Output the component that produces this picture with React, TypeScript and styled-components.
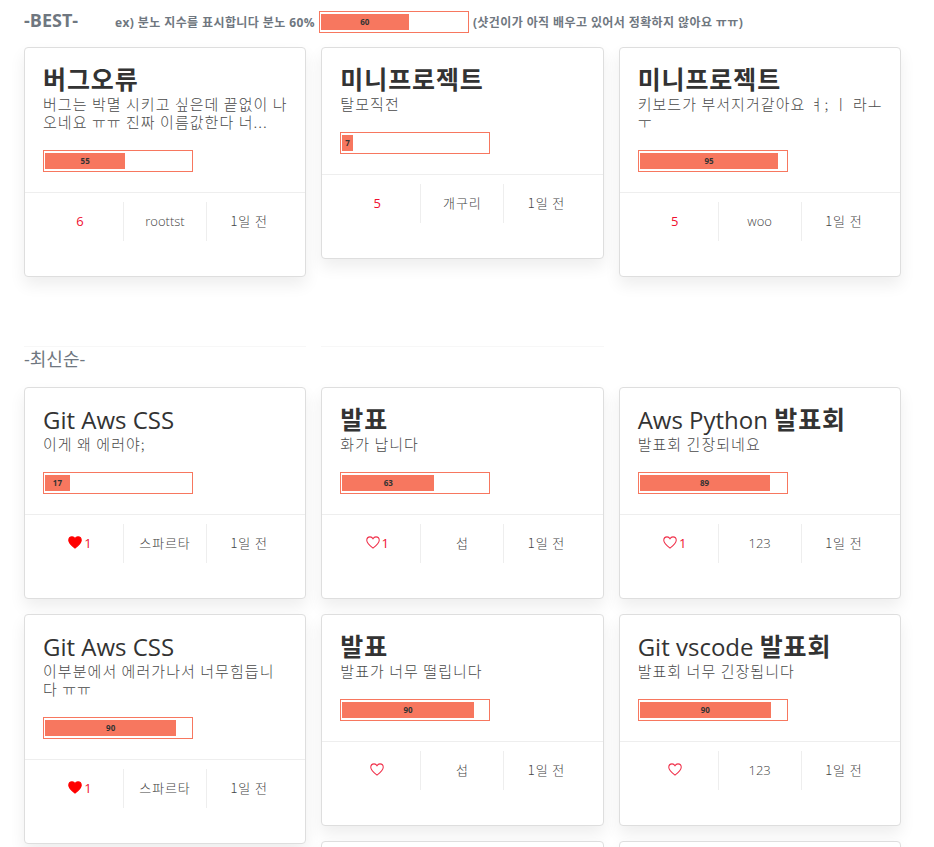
import React from 'react'
import styled, { createGlobalStyle } from 'styled-components'

const KR = '"Noto Sans CJK KR"'

const GlobalStyle = createGlobalStyle`
  html, body {
    margin: 0;
    padding: 0;
    height: 847px;
    overflow: hidden;
    background: #fff;
    font-family: "Open Sans", ${KR}, sans-serif;
    color: #333;
  }
`

const Page = styled.div`
  padding: 11px 33px 0 24px;
`

const HintRow = styled.div`
  display: flex;
  align-items: center;
  height: 22px;
  margin-bottom: 14px;
`

const SectionTitle = styled.div`
  color: #6f7780;
  font-weight: 700;
  font-size: 18px;
  line-height: 18px;
  margin-top: -4px;
  width: 91px;
  flex: none;
`

const HintText = styled.span`
  color: #6f7780;
  font-size: 12px;
  font-weight: 700;
  letter-spacing: 0.4px;
  white-space: nowrap;
  margin-right: ${({ $gap }: { $gap: number }) => $gap}px;
`

const Columns = styled.div`
  display: grid;
  grid-template-columns: repeat(3, 1fr);
  column-gap: 15px;
  align-items: start;
`

const Column = styled.div`
  display: flex;
  flex-direction: column;
  gap: 15px;
`

const Rules = styled(Columns)`
  margin-top: 69px;
`

const Rule = styled.div`
  height: 1px;
  background: #f7f7f7;
`

const LatestTitle = styled.div`
  color: #6f7780;
  font-size: 18px;
  font-weight: 400;
  line-height: 22px;
  margin: 1px 0 17px;
`

const Card = styled.div`
  background: #fff;
  border: 1px solid #dedede;
  border-radius: 4px;
  box-shadow: 0 8px 16px rgba(0, 0, 0, 0.07);
`

const NextCard = styled(Card)`
  min-height: 200px;
`

const CardBody = styled.div`
  padding: 17px 17px 20px 18px;
`

const Title = styled.h3`
  margin: 0;
  height: 30px;
  font-size: 24px;
  font-weight: 500;
  line-height: 30px;
  color: #333;
  white-space: nowrap;
`

const Hangul = styled.b`
  font-family: ${KR}, sans-serif;
  font-weight: 700;
  font-size: 25px;
  line-height: 0;
  letter-spacing: 0.9px;
`

const Desc = styled.p`
  margin: 0 0 19px;
  font-family: ${KR}, sans-serif;
  font-size: 15px;
  font-weight: 300;
  line-height: 18px;
  letter-spacing: 1.05px;
  color: #4a4a4a;
  word-break: break-all;
  min-height: 18px;
`

const Meter = styled.div`
  box-sizing: border-box;
  width: 150px;
  height: 22px;
  flex: none;
  border: 1px solid #f7775f;
  padding: 2px 1px;
  margin-right: ${({ $gap = 0 }: { $gap?: number }) => $gap}px;
`

const MeterFill = styled.div`
  height: 16px;
  background: #f7775f;
  color: #333;
  font-size: 8px;
  font-weight: 700;
  line-height: 16px;
  text-align: center;
`

const CardFooter = styled.div`
  display: grid;
  grid-template-columns: 98px 83px 1fr;
  border-top: 1px solid #eee;
  padding: 9px 0 35px;
`

const FooterCell = styled.div`
  box-sizing: border-box;
  height: 39px;
  padding-bottom: 2px;
  display: flex;
  align-items: center;
  justify-content: center;
  font-size: 13px;
  font-weight: 300;
  color: #444;
  white-space: nowrap;
  & + & {
    border-left: 1px solid #eee;
  }
`

const LikeCell = styled(FooterCell)`
  padding-left: 12px;
  color: #f01030;
  font-weight: 400;
  gap: 2px;
`

const DateCell = styled(FooterCell)`
  padding-right: 14px;
`

const KrText = styled.span`
  font-family: ${KR}, sans-serif;
  font-size: 13px;
  font-weight: 300;
  letter-spacing: 0.9px;
`

const HeartIcon = ({ filled }: { filled: boolean }) => (
  <svg width="14" height="13" viewBox="0 0 16 15">
    <path
      d="M8 14 C3 10.2 .8 7.8 .8 4.9 C.8 2.6 2.6 1 4.6 1 C6 1 7.3 1.8 8 3.1 C8.7 1.8 10 1 11.4 1 C13.4 1 15.2 2.6 15.2 4.9 C15.2 7.8 13 10.2 8 14 Z"
      fill={filled ? '#f00' : 'none'}
      stroke={filled ? '#f00' : '#f0304a'}
      strokeWidth="1.2"
    />
  </svg>
)

type Post = {
  title: React.ReactNode
  desc: string
  score: number
  likes?: number | string
  heart?: 'filled' | 'empty'
  author: string
}

const best: Post[] = [
  {
    title: <Hangul>버그오류</Hangul>,
    desc: '버그는 박멸 시키고 싶은데 끝없이 나오네요 ㅠㅠ 진짜 이름값한다 너...',
    score: 55,
    likes: 6,
    author: 'roottst',
  },
  {
    title: <Hangul>미니프로젝트</Hangul>,
    desc: '탈모직전',
    score: 7,
    likes: 5,
    author: '개구리',
  },
  {
    title: <Hangul>미니프로젝트</Hangul>,
    desc: '키보드가 부서지거같아요 ㅕ; ㅣ 라ㅗ ㅜ',
    score: 95,
    likes: 5,
    author: 'woo',
  },
]

const latest: Post[][] = [
  [
    { title: 'Git Aws CSS', desc: '이게 왜 에러야;', score: 17, likes: 1, heart: 'filled', author: '스파르타' },
    { title: 'Git Aws CSS', desc: '이부분에서 에러가나서 너무힘듭니다 ㅠㅠ', score: 90, likes: 1, heart: 'filled', author: '스파르타' },
  ],
  [
    { title: <Hangul>발표</Hangul>, desc: '화가 납니다', score: 63, likes: 1, heart: 'empty', author: '섭' },
    { title: <Hangul>발표</Hangul>, desc: '발표가 너무 떨립니다', score: 90, heart: 'empty', author: '섭' },
  ],
  [
    { title: <>Aws Python <Hangul>발표회</Hangul></>, desc: '발표회 긴장되네요', score: 89, likes: 1, heart: 'empty', author: '123' },
    { title: <>Git vscode <Hangul>발표회</Hangul></>, desc: '발표회 너무 긴장됩니다', score: 90, heart: 'empty', author: '123' },
  ],
]

const AngerMeter = ({ score, gap }: { score: number; gap?: number }) => (
  <Meter $gap={gap}>
    <MeterFill style={{ width: `${score}%` }}>{score}</MeterFill>
  </Meter>
)

const PostCard = ({ post }: { post: Post }) => (
  <Card>
    <CardBody>
      <Title>{post.title}</Title>
      <Desc>{post.desc}</Desc>
      <AngerMeter score={post.score} />
    </CardBody>
    <CardFooter>
      <LikeCell>
        {post.heart && <HeartIcon filled={post.heart === 'filled'} />}
        {post.likes !== undefined && <span>{post.likes}</span>}
      </LikeCell>
      <FooterCell>
        {/^[a-z0-9]+$/.test(post.author) ? post.author : <KrText>{post.author}</KrText>}
      </FooterCell>
      <DateCell>
        <KrText>1일 전</KrText>
      </DateCell>
    </CardFooter>
  </Card>
)

export default function App() {
  return (
    <Page>
      <GlobalStyle />
      <HintRow>
        <SectionTitle>-BEST-</SectionTitle>
        <HintText $gap={4}>ex) 분노 지수를 표시합니다 분노 60%</HintText>
        <AngerMeter score={60} gap={4} />
        <HintText $gap={0}>(샷건이가 아직 배우고 있어서 정확하지 않아요 ㅠㅠ)</HintText>
      </HintRow>
      <Columns>
        {best.map((post, i) => (
          <PostCard key={i} post={post} />
        ))}
      </Columns>
      <Rules>
        <Rule />
        <Rule />
      </Rules>
      <LatestTitle>-최신순-</LatestTitle>
      <Columns>
        {latest.map((posts, i) => (
          <Column key={i}>
            {posts.map((post, j) => (
              <PostCard key={j} post={post} />
            ))}
            <NextCard />
          </Column>
        ))}
      </Columns>
    </Page>
  )
}
